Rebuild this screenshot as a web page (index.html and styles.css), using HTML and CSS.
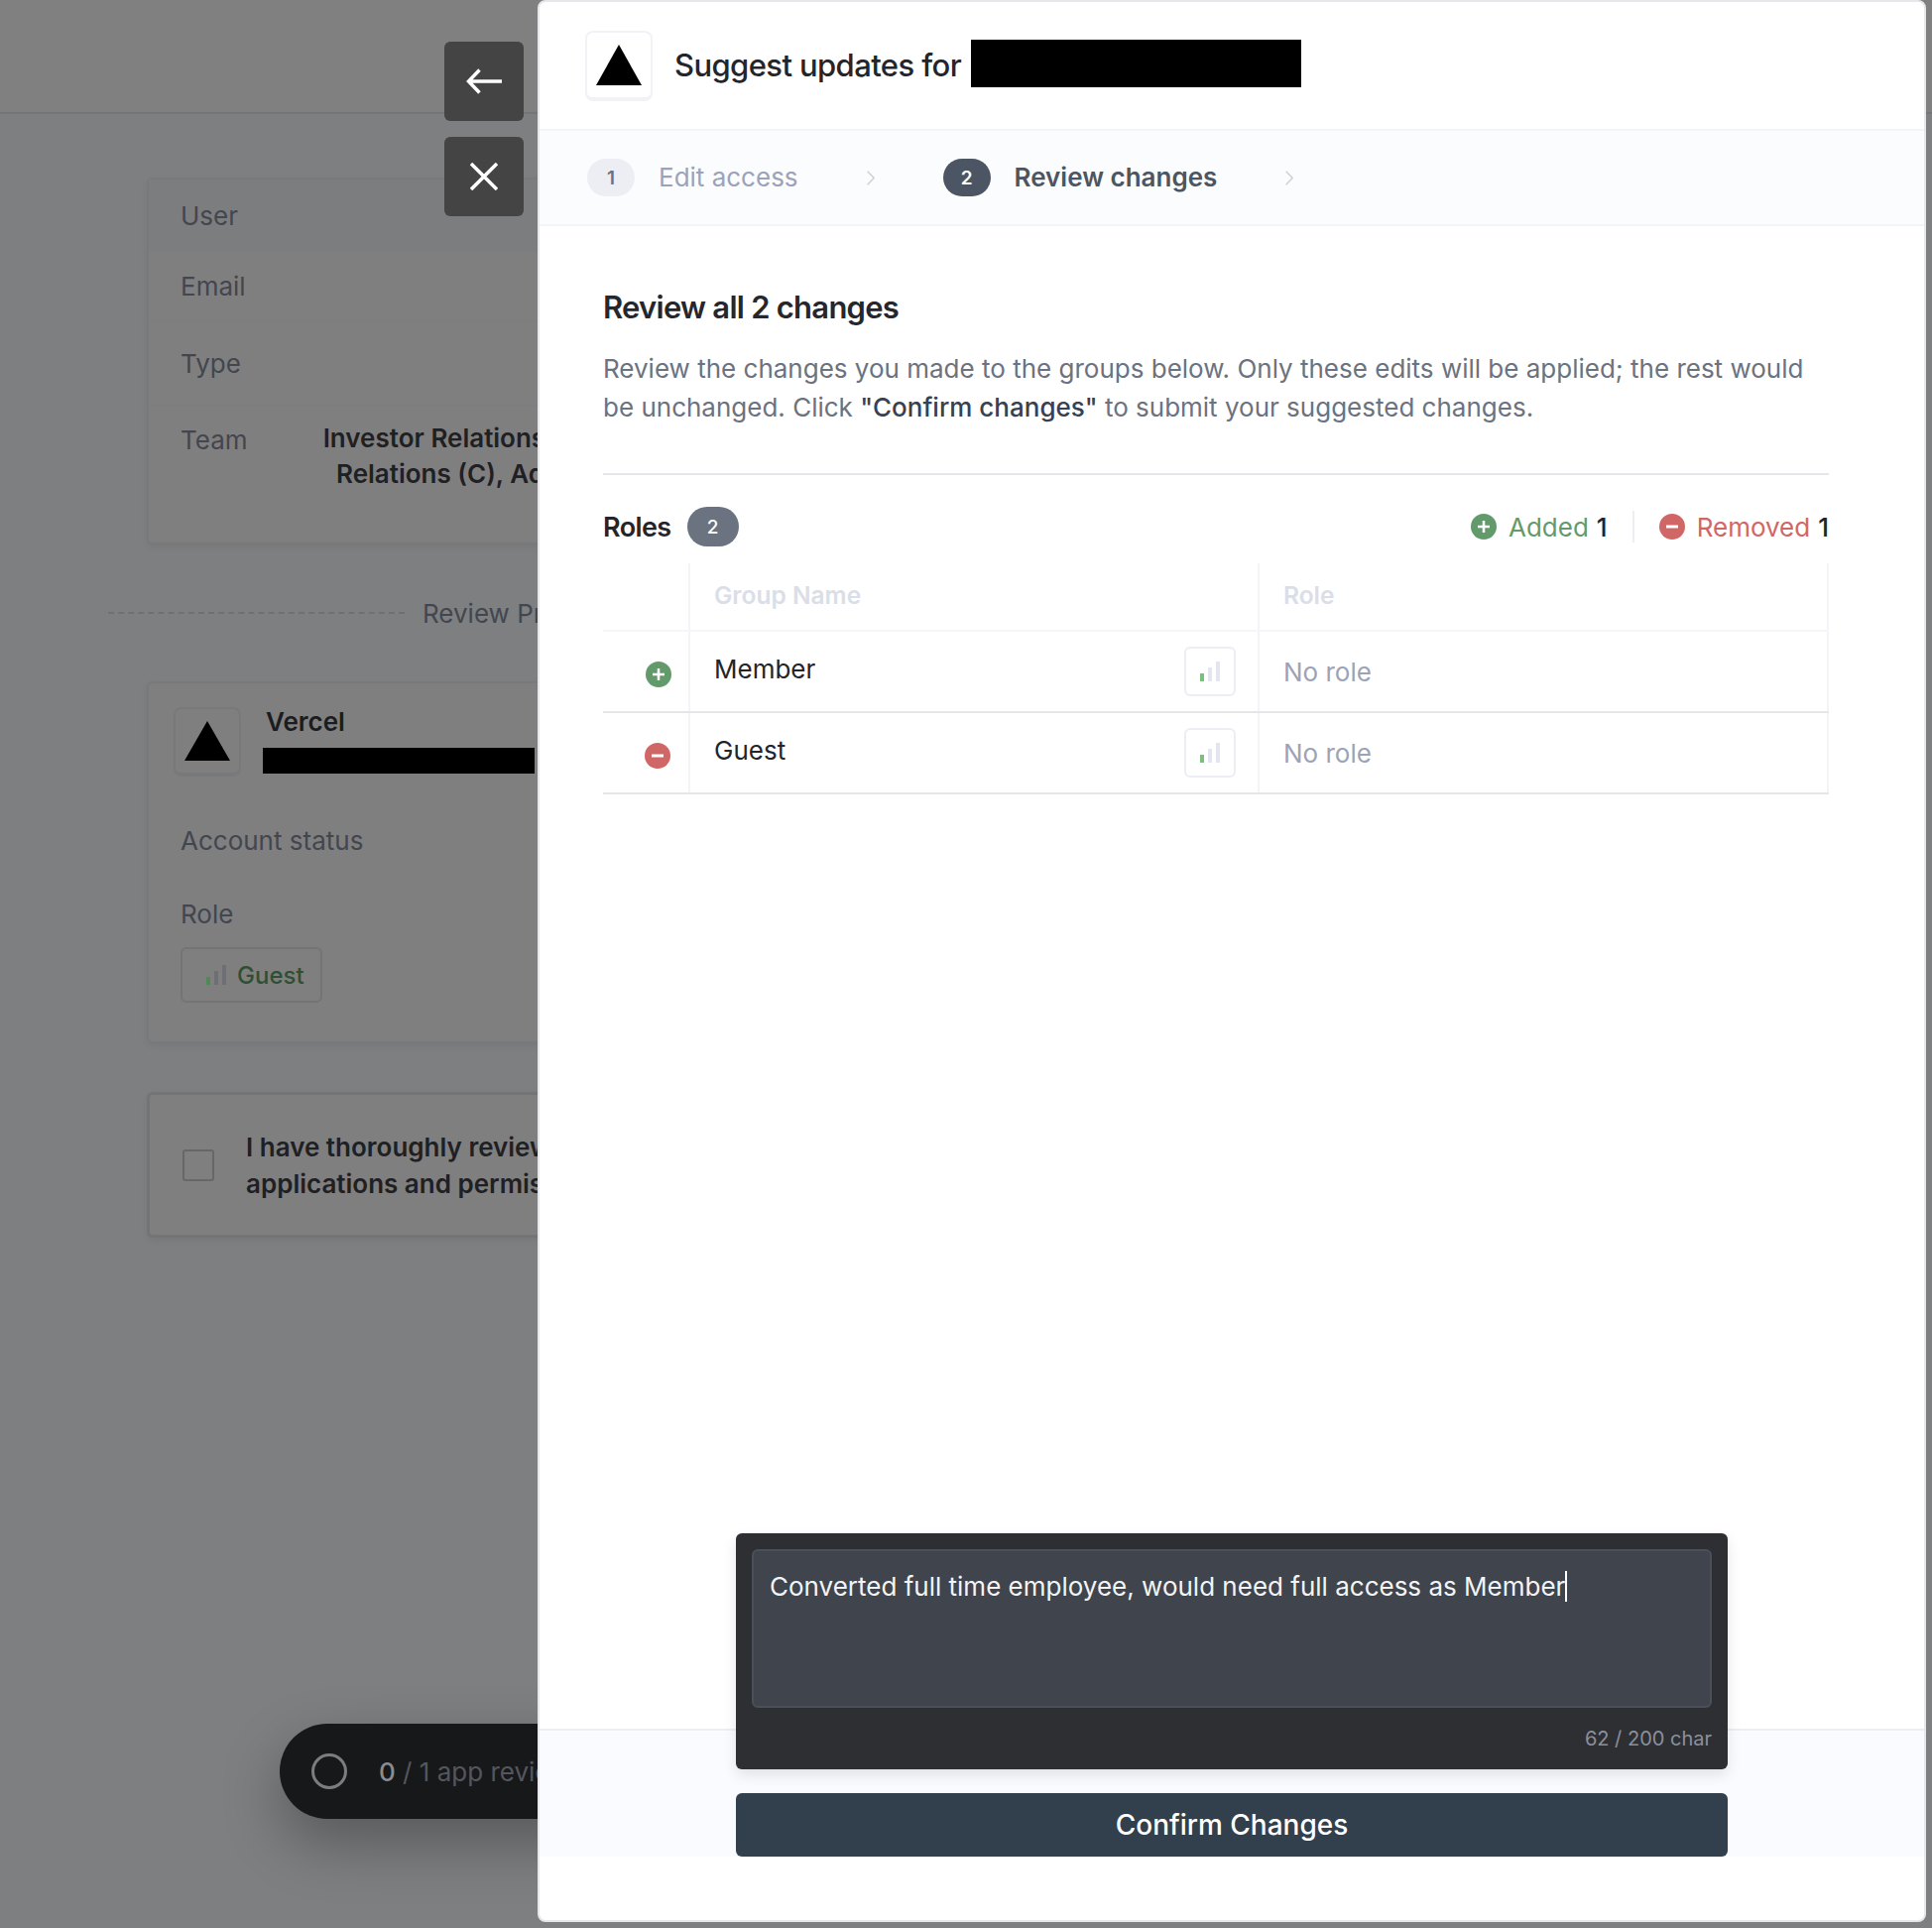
FILE: index.html
```html
<!DOCTYPE html>
<html lang="en">
  <head>
    <meta charset="UTF-8" />
    <meta name="viewport" content="width=device-width, initial-scale=1.0" />
    <title>Suggest updates</title>
    <link rel="stylesheet" href="styles.css">
  </head>
  <body>
    <!-- Dimmed page behind the panel -->
    <div class="page">
      <div class="topbar"></div>
      <div class="content">
        <div class="card user-card">
          <div class="info-row first"><span class="label">User</span></div>
          <div class="info-row email"><span class="label">Email</span></div>
          <div class="info-row type"><span class="label">Type</span></div>
          <div class="info-row team">
            <span class="label">Team</span>
            <span class="team-value">Investor Relations (M), Sales Investor<br />Relations (C), Admin Access Group</span>
          </div>
        </div>

        <div class="section-title">
          <span class="dash"></span>
          <span>Review Previous Access</span>
        </div>

        <div class="card app-card">
          <div class="app-head">
            <div class="logo small">
              <svg width="46" height="40" viewBox="0 0 46 40"><path d="M23 0 46 40H0Z" /></svg>
            </div>
            <div class="app-name">
              <strong>Vercel</strong>
              <span class="redacted sub"></span>
            </div>
          </div>
          <div class="label status">Account status</div>
          <div class="label role">Role</div>
          <div class="role-chip">
            <svg width="20" height="20" viewBox="0 0 20 20">
              <rect x="0" y="12" width="4" height="8" fill="#4f8a55" />
              <rect x="8" y="6" width="4" height="14" fill="#6d6f74" />
              <rect x="16" y="0" width="4" height="20" fill="#6d6f74" />
            </svg>
            <span>Guest</span>
          </div>
        </div>

        <div class="card confirm-card">
          <span class="checkbox"></span>
          <p>I have thoroughly reviewed all of the user's<br />applications and permissions listed above</p>
        </div>
      </div>
    </div>

    <!-- Floating progress pill -->
    <div class="progress-pill">
      <span class="ring"></span>
      <span class="progress-text"><b>0</b> / 1 app reviewed</span>
    </div>

    <!-- Panel buttons -->
    <div class="panel-buttons">
      <button class="panel-btn">
        <svg width="36" height="26" viewBox="0 0 36 26" fill="none" stroke="#fff" stroke-width="3.500"><path d="M36 13H3M13.500 1.500 2.500 13l11 11.500" /></svg>
      </button>
      <button class="panel-btn">
        <svg width="28" height="28" viewBox="0 0 28 28" fill="none" stroke="#fff" stroke-width="3.500"><path d="M1 1l26 26M27 1 1 27" /></svg>
      </button>
    </div>

    <!-- Side panel -->
    <div class="panel">
      <div class="panel-header">
        <div class="logo">
          <svg width="46" height="41" viewBox="0 0 46 41"><path d="M23 0 46 41H0Z" /></svg>
        </div>
        <h1>Suggest updates for</h1>
        <span class="redacted name"></span>
      </div>

      <div class="steps">
        <span class="step-num">1</span>
        <span class="step-text">Edit access</span>
        <svg class="chevron" width="8" height="15" viewBox="0 0 8 15" fill="none" stroke="#cdd1da" stroke-width="1.500"><path d="M.7.7 7.200 7.500.7 14.300" /></svg>
        <span class="step-num active">2</span>
        <span class="step-text active">Review changes</span>
        <svg class="chevron" width="8" height="15" viewBox="0 0 8 15" fill="none" stroke="#cdd1da" stroke-width="1.500"><path d="M.7.7 7.200 7.500.7 14.300" /></svg>
      </div>

      <div class="panel-body">
        <h2>Review all 2 changes</h2>
        <p class="intro">Review the changes you made to the groups below. Only these edits will be applied; the rest would be unchanged. Click <b>"Confirm changes"</b> to submit your suggested changes.</p>

        <div class="roles-head">
          <h3>Roles</h3>
          <span class="count">2</span>
          <div class="legend">
            <svg class="diff-icon" viewBox="0 0 26 26"><circle cx="13" cy="13" r="13" fill="#639a6b" /><path d="M13 7v12M7 13h12" stroke="#fff" stroke-width="2.500" /></svg>
            <span class="added">Added</span>
            <b>1</b>
            <span class="legend-sep"></span>
            <svg class="diff-icon" viewBox="0 0 26 26"><circle cx="13" cy="13" r="13" fill="#d16666" /><path d="M7 13h12" stroke="#fff" stroke-width="3" /></svg>
            <span class="removed">Removed</span>
            <b>1</b>
          </div>
        </div>

        <div class="table">
          <div class="row head">
            <div class="cell mark"></div>
            <div class="cell">Group Name</div>
            <div class="cell last">Role</div>
          </div>
          <div class="row">
            <div class="cell mark">
              <svg class="diff-icon" viewBox="0 0 26 26"><circle cx="13" cy="13" r="13" fill="#639a6b" /><path d="M13 7v12M7 13h12" stroke="#fff" stroke-width="2.500" /></svg>
            </div>
            <div class="cell group">
              <span>Member</span>
              <span class="role-box">
                <svg width="20" height="20" viewBox="0 0 20 20">
                  <rect x="0" y="12" width="4" height="8" fill="#7bbf7f" />
                  <rect x="8" y="6" width="4" height="14" fill="#e3e6ee" />
                  <rect x="16" y="0" width="4" height="20" fill="#e3e6ee" />
                </svg>
              </span>
            </div>
            <div class="cell last no-role">No role</div>
          </div>
          <div class="row">
            <div class="cell mark removed-mark">
              <svg class="diff-icon" viewBox="0 0 26 26"><circle cx="13" cy="13" r="13" fill="#d16666" /><path d="M7 13h12" stroke="#fff" stroke-width="3" /></svg>
            </div>
            <div class="cell group">
              <span>Guest</span>
              <span class="role-box">
                <svg width="20" height="20" viewBox="0 0 20 20">
                  <rect x="0" y="12" width="4" height="8" fill="#7bbf7f" />
                  <rect x="8" y="6" width="4" height="14" fill="#e3e6ee" />
                  <rect x="16" y="0" width="4" height="20" fill="#e3e6ee" />
                </svg>
              </span>
            </div>
            <div class="cell last no-role">No role</div>
          </div>
        </div>
      </div>

      <div class="panel-footer">
        <div class="comment-box">
          <div class="comment-input">Converted full time employee, would need full access as Member<span class="caret"></span></div>
          <div class="char-count">62 / 200 char</div>
        </div>
        <button class="confirm-btn">Confirm Changes</button>
      </div>
    </div>
  </body>
</html>
```

FILE: styles.css
```css
/* Base Styles */
* {
  margin: 0;
  padding: 0;
  box-sizing: border-box;
  font-family: "Inter", "Liberation Sans", sans-serif;
}

body {
  position: relative;
  width: 1948px;
  height: 1944px;
  overflow: hidden;
  background: #7e7f81;
}

/* Dimmed page */
.topbar {
  height: 115px;
  background: #808080;
  border-bottom: 2px solid #747577;
}

.content {
  padding: 64px 0 0 148px;
  width: 1300px;
}

.card {
  background: #7f7f7f;
  border: 2px solid #78797b;
  border-radius: 6px;
  box-shadow: 0 3px 6px rgba(0, 0, 0, 0.06);
}

.label {
  font-size: 26px;
  color: #43464e;
}

.user-card {
  height: 370px;
}

.info-row {
  display: flex;
  padding-left: 32px;
}

.info-row.first {
  height: 73px;
  align-items: center;
  background: #7c7d7f;
}

.info-row.email {
  height: 70px;
  align-items: center;
  border-bottom: 1px solid #7c7d7f;
}

.info-row.type {
  height: 85px;
  align-items: center;
  border-bottom: 1px solid #7c7d7f;
}

.info-row.team {
  padding-top: 19px;
  justify-content: flex-start;
}

.team-value {
  width: 520px;
  margin-left: 49px;
  text-align: center;
  font-size: 26px;
  line-height: 36px;
  font-weight: 600;
  color: #1f2023;
  white-space: nowrap;
  margin-top: -4px;
}

.section-title {
  display: flex;
  align-items: center;
  gap: 18px;
  margin: 53px 0 53px -39px;
  height: 32px;
  font-size: 26px;
  color: #43464e;
  white-space: nowrap;
}

.dash {
  width: 299px;
  border-top: 2px dashed #6f7072;
}

.app-card {
  height: 365px;
  padding: 24px 32px 0;
  position: relative;
}

.app-head {
  display: flex;
  margin-left: -7px;
}

.app-name {
  display: flex;
  flex-direction: column;
  margin-left: 22px;
}

.app-name strong {
  font-size: 26px;
  line-height: 34px;
  font-weight: 600;
  color: #1b1c1f;
  margin: -2px 0 0 3px;
}

.redacted {
  display: block;
  background: #000;
}

.redacted.sub {
  width: 274px;
  height: 26px;
  margin-top: 9px;
}

.status {
  margin-top: 49px;
  line-height: 32px;
}

.role {
  margin-top: 42px;
  line-height: 32px;
}

.role-chip {
  display: inline-flex;
  align-items: center;
  gap: 11px;
  width: 143px;
  height: 56px;
  margin-top: 17px;
  padding-left: 24px;
  border: 2px solid #737478;
  border-radius: 6px;
  font-size: 24px;
  font-weight: 500;
  color: #2f4f35;
}

.confirm-card {
  display: flex;
  align-items: center;
  gap: 32px;
  height: 147px;
  margin-top: 49px;
  padding-left: 33px;
  border: 3px solid #737476;
}

.checkbox {
  width: 32px;
  height: 32px;
  flex: none;
  border: 2px solid #66676a;
  border-radius: 3px;
}

.confirm-card p {
  font-size: 26px;
  line-height: 37px;
  font-weight: 600;
  color: #1f2023;
  white-space: nowrap;
}

/* Progress pill */
.progress-pill {
  position: absolute;
  left: 282px;
  top: 1738px;
  width: 500px;
  height: 96px;
  display: flex;
  align-items: center;
  gap: 32px;
  padding-left: 32px;
  background: #17181a;
  border-radius: 48px;
  box-shadow: 0 24px 60px rgba(0, 0, 0, 0.3);
}

.ring {
  width: 36px;
  height: 36px;
  border: 3px solid #7d7d7d;
  border-radius: 50%;
}

.progress-text {
  font-size: 26px;
  color: #55565c;
  white-space: nowrap;
}

.progress-text b {
  font-weight: 500;
  color: #8b8c90;
}

/* Panel buttons */
.panel-buttons {
  position: absolute;
  left: 448px;
  top: 42px;
  display: flex;
  flex-direction: column;
  gap: 16px;
}

.panel-btn {
  width: 80px;
  height: 80px;
  display: flex;
  align-items: center;
  justify-content: center;
  background: #444;
  border: none;
  border-radius: 6px;
}

/* Side panel */
.panel {
  position: absolute;
  left: 542px;
  top: 0;
  width: 1400px;
  height: 1938px;
  display: flex;
  flex-direction: column;
  background: #fff;
  border: 2px solid #e6e7ea;
  border-radius: 8px;
}

.panel-header {
  display: flex;
  align-items: center;
  height: 128px;
  padding-left: 46px;
  flex: none;
}

.logo {
  display: flex;
  align-items: center;
  justify-content: center;
  width: 68px;
  height: 71px;
  background: #fff;
  border: 2px solid #f1f2f5;
  border-bottom-width: 4px;
  border-radius: 8px;
}

.logo.small {
  background: none;
  border-color: #78797b;
  height: 70px;
}

.panel-header h1 {
  margin: -2px 0 0 22px;
  font-size: 31px;
  font-weight: 500;
  letter-spacing: -0.6px;
  color: #24252a;
}

.redacted.name {
  width: 333px;
  height: 48px;
  margin-left: 10px;
  margin-top: -4px;
}

.steps {
  display: flex;
  align-items: center;
  height: 98px;
  padding-left: 48px;
  flex: none;
  background: #fbfcfe;
  border-top: 2px solid #f3f4f7;
  border-bottom: 2px solid #f3f4f7;
}

.step-num {
  width: 48px;
  height: 38px;
  display: flex;
  align-items: center;
  justify-content: center;
  border-radius: 19px;
  background: #eceef3;
  font-size: 19px;
  font-weight: 600;
  color: #6b7280;
}

.step-num.active {
  background: #4b5563;
  color: #fff;
}

.step-text {
  margin: -1px 0 0 24px;
  font-size: 26px;
  color: #9ca3b8;
}

.step-text.active {
  font-weight: 600;
  color: #4b5563;
}

.chevron {
  margin: 0 69px 0 69px;
}

.panel-body {
  flex: 1;
  padding: 62px 96px 0 64px;
}

.panel-body h2 {
  font-size: 31px;
  line-height: 40px;
  font-weight: 600;
  letter-spacing: -0.75px;
  color: #26272c;
}

.intro {
  margin-top: 22px;
  padding-bottom: 47px;
  border-bottom: 2px solid #e5e7eb;
  font-size: 26px;
  line-height: 39px;
  color: #6b7280;
}

.intro b {
  font-weight: 500;
  color: #374151;
}

.roles-head {
  display: flex;
  align-items: center;
  height: 40px;
  margin-top: 32px;
}

.roles-head h3 {
  font-size: 27px;
  font-weight: 600;
  letter-spacing: -0.6px;
  color: #24252a;
}

.count {
  width: 52px;
  height: 40px;
  margin-left: 16px;
  display: flex;
  align-items: center;
  justify-content: center;
  border-radius: 20px;
  background: #6b7280;
  color: #fff;
  font-size: 19px;
  font-weight: 500;
}

.legend {
  display: flex;
  align-items: center;
  margin-left: auto;
  font-size: 26px;
}

.legend b {
  margin-left: 8px;
  font-weight: 500;
  color: #24252a;
}

.diff-icon {
  width: 26px;
  height: 26px;
  display: block;
}

.added {
  margin-left: 12px;
  color: #639a6b;
}

.removed {
  margin-left: 12px;
  color: #d16666;
}

.legend-sep {
  width: 2px;
  height: 32px;
  margin: 0 25px;
  background: #eceef1;
}

/* Table */
.table {
  margin-top: 17px;
}

.row {
  display: grid;
  grid-template-columns: 86px 574px 1fr;
  height: 82px;
  border-bottom: 2px solid #e5e6e8;
  font-size: 26px;
  color: #24252a;
}

.row.head {
  height: 69px;
  border-bottom-color: #f5f6fa;
  font-size: 24.500px;
  font-weight: 600;
  color: #dadee8;
}

.row.head .cell {
  padding-bottom: 4px;
}

.cell {
  display: flex;
  align-items: center;
  padding-left: 24px;
  border-left: 2px solid #f3f4f7;
}

.cell.mark {
  justify-content: flex-end;
  padding: 6px 17px 0 0;
  border-left: none;
}

.cell.removed-mark {
  padding-right: 18px;
}

.cell.last {
  border-right: 2px solid #f3f4f7;
}

.cell.group {
  justify-content: space-between;
  padding-right: 22px;
}

.cell.group > span:first-child {
  margin-top: -6px;
}

.role-box {
  width: 52px;
  height: 50px;
  display: flex;
  align-items: center;
  justify-content: center;
  background: #fff;
  border: 2px solid #eceef3;
  border-radius: 6px;
}

.no-role {
  color: #9ca3b8;
}

/* Footer with comment box */
.panel-footer {
  height: 129px;
  margin-bottom: 64px;
  padding: 0 198px;
  flex: none;
  background: #fafbfe;
  border-top: 2px solid #eceef3;
}

.comment-box {
  height: 238px;
  margin-top: -199px;
  padding: 16px 16px 0;
  position: relative;
  background: #2e2f33;
  border-radius: 6px;
  box-shadow: 0 6px 14px rgba(0, 0, 0, 0.1);
}

.comment-input {
  height: 160px;
  padding: 20px 16px;
  background: #40444d;
  border: 2px solid #4b4f5a;
  border-radius: 6px;
  font-size: 26px;
  line-height: 32px;
  color: #f3f4f6;
}

.caret {
  display: inline-block;
  width: 2px;
  height: 31px;
  vertical-align: -6px;
  background: #fff;
}

.char-count {
  margin-top: 19px;
  text-align: right;
  font-size: 20px;
  line-height: 24px;
  color: #8b8f9c;
}

.confirm-btn {
  display: block;
  width: 100%;
  height: 64px;
  margin-top: 24px;
  background: #323f4c;
  border: none;
  border-radius: 6px;
  font-size: 28px;
  font-weight: 500;
  color: #fff;
}
```
